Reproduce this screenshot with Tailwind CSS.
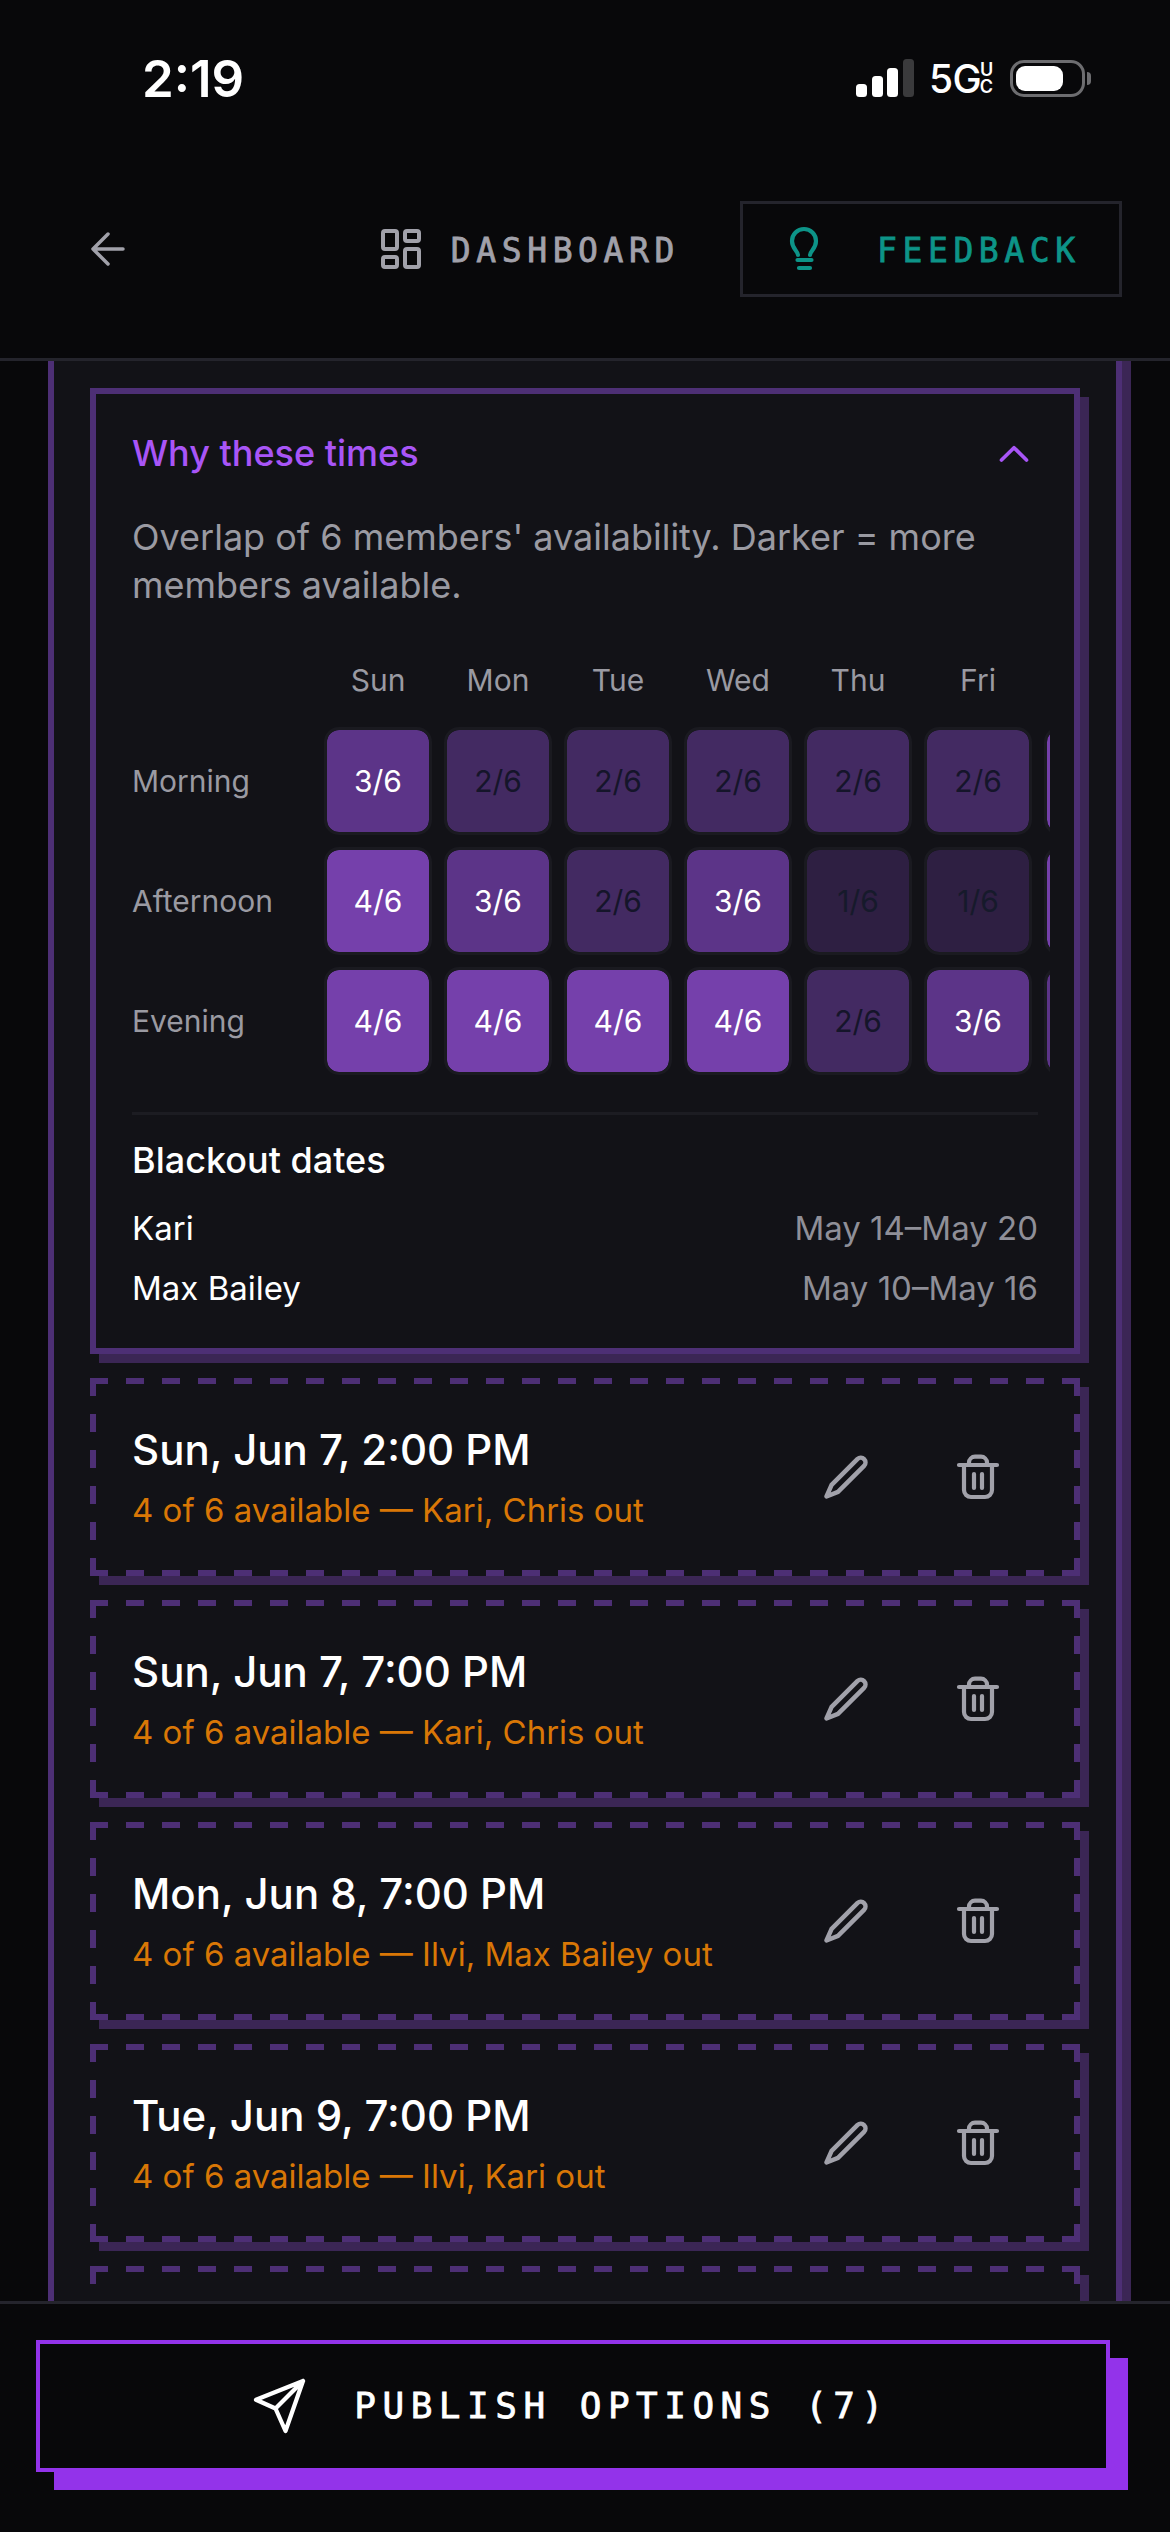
<!DOCTYPE html>
<html lang="en">
<head>
  <meta charset="UTF-8">
  <meta name="viewport" content="width=device-width, initial-scale=1.0">
  <title>Why these times</title>
  <script src="https://cdn.jsdelivr.net/npm/@tailwindcss/browser@4"></script>
</head>
<body class="bg-[#08080a] font-[family-name:Inter,sans-serif] text-white">
  <svg class="hidden">
    <symbol id="dash" viewBox="0 0 990 198">
      <path d="M0 3H990M0 195H990M3 0V198M987 0V198" fill="none" stroke="#4d2f75" stroke-width="6" stroke-dasharray="18 18"/>
    </symbol>
    <symbol id="pencil" viewBox="0 0 44 44">
      <path d="M2.500 41.500L7.600 29.900L33.600 3.900A4.750 4.750 0 0 1 40.300 10.600L14 36.900Z" fill="none" stroke="#a1a1aa" stroke-width="4.500" stroke-linejoin="round"/>
    </symbol>
    <symbol id="trash" viewBox="0 0 44 48">
      <path d="M3 12H41M13 12V9.500A6 6 0 0 1 19 3.700H25A6 6 0 0 1 31 9.500V12M8 12V37A7 7 0 0 0 15 44H29A7 7 0 0 0 36 37V12M18 21V35M26 21V35" fill="none" stroke="#a1a1aa" stroke-width="4.200" stroke-linecap="round"/>
    </symbol>
  </svg>

  <div class="flex flex-col h-[2532px] w-[1170px] overflow-hidden">
    <header class="h-[361px] shrink-0 border-b-[3px] border-[#24242c] bg-[#08080a]">
      <div class="h-[156px] flex items-center pl-[142px] pr-[79px]">
        <span class="text-[51px] font-semibold leading-none">2:19</span>
        <div class="ml-auto flex items-center">
          <svg width="58" height="38" viewBox="0 0 58 38">
            <rect x="0" y="25" width="11" height="13" rx="3.500" fill="#fff"/>
            <rect x="16" y="17" width="11" height="21" rx="3.500" fill="#fff"/>
            <rect x="31" y="9" width="11" height="29" rx="3.500" fill="#fff"/>
            <rect x="47" y="0" width="11" height="38" rx="3.500" fill="#3a3a3c"/>
          </svg>
          <span class="ml-[15px] w-[48px] text-[39px] font-medium leading-none tracking-[-0.500px]">5G</span>
          <span class="ml-[2px] w-[15px] flex flex-col text-center text-[18px] font-semibold leading-[17px]"><span>U</span><span>C</span></span>
          <div class="ml-[16px] flex items-center">
            <div class="w-[75px] h-[37px] border-[3px] border-[#6d6d70] rounded-[14px] p-[3px]">
              <div class="w-[47px] h-full bg-white rounded-[9px]"></div>
            </div>
            <div class="ml-[2px] w-[4px] h-[13px] bg-[#6d6d70] rounded-r-full"></div>
          </div>
        </div>
      </div>
      <nav class="mt-[45px] h-[96px] flex items-center pl-[91px] pr-[48px]">
        <svg width="34" height="34" viewBox="0 0 34 34" fill="none" stroke="#a1a1aa" stroke-width="3.500" stroke-linecap="round" stroke-linejoin="round"><path d="M32 17H2M17 2L2 17L17 32"/></svg>
        <div class="ml-auto flex items-center">
          <svg width="48" height="48" viewBox="0 0 24 24" fill="none" stroke="#a1a1aa" stroke-width="2" stroke-linejoin="round"><rect x="3" y="3" width="7" height="9" rx="1"/><rect x="14" y="3" width="7" height="5" rx="1"/><rect x="14" y="12" width="7" height="9" rx="1"/><rect x="3" y="16" width="7" height="5" rx="1"/></svg>
          <span class="ml-[26px] pt-[2px] font-[family-name:'DejaVu_Sans_Mono',monospace] text-[33px] leading-none tracking-[5.600px] [-webkit-text-stroke:0.8px] text-[#a1a1aa]">DASHBOARD</span>
        </div>
        <div class="ml-[60px] w-[382px] h-[96px] border-[3px] border-[#24242c] flex items-center pl-[40px]">
          <svg width="42" height="48" viewBox="0 0 42 48" fill="none" stroke="#0d9488" stroke-width="4.200" stroke-linecap="round"><path d="M15 30C15 26 9 24 9 16A12 12 0 0 1 33 16C33 24 27 26 27 30"/><path d="M14.500 35H28.500M16 43H27"/></svg>
          <span class="ml-[52px] pt-[2px] font-[family-name:'DejaVu_Sans_Mono',monospace] text-[33px] leading-none tracking-[5.600px] [-webkit-text-stroke:0.8px] text-[#0d9488]">FEEDBACK</span>
        </div>
      </nav>
    </header>

    <main class="flex-1 min-h-0 overflow-hidden">
      <div class="ml-[48px] w-[1074px] border-x-[6px] border-[#4d2f75] bg-[#121217] shadow-[9px_0_0_#3b2655] pt-[27px] px-[36px] pb-[40px] flex flex-col gap-[24px]">

        <section class="h-[966px] border-[6px] border-[#4d2f75] shadow-[9px_9px_0_#3b2655] bg-[#121217] pt-[35px] pl-[36px] pr-[36px] pb-[36px]">
          <div class="flex items-center justify-between h-[48px]">
            <h2 class="text-[36px] leading-[48px] font-medium text-[#a855f7]">Why these times</h2>
            <svg class="mr-[6px]" width="36" height="36" viewBox="0 0 36 36" fill="none" stroke="#a855f7" stroke-width="3.700" stroke-linecap="round" stroke-linejoin="round"><path d="M5.500 25L18 12.700L30.500 25"/></svg>
          </div>
          <p class="mt-[36px] text-[36px] leading-[48px] text-[#9a9aa2]">Overlap of 6 members' availability. Darker = more members available.</p>

          <div class="mt-[51px] mr-[-12px] overflow-hidden">
            <div class="grid grid-cols-[180px_repeat(7,108px)] gap-[12px] w-max text-[30px] items-center">
              <div class="h-[55px]"></div>
              <div class="h-[55px] leading-[40px] text-center text-[#9a9aa2]">Sun</div>
              <div class="h-[55px] leading-[40px] text-center text-[#9a9aa2]">Mon</div>
              <div class="h-[55px] leading-[40px] text-center text-[#9a9aa2]">Tue</div>
              <div class="h-[55px] leading-[40px] text-center text-[#9a9aa2]">Wed</div>
              <div class="h-[55px] leading-[40px] text-center text-[#9a9aa2]">Thu</div>
              <div class="h-[55px] leading-[40px] text-center text-[#9a9aa2]">Fri</div>
              <div class="h-[55px]"></div>

              <div class="text-[#9a9aa2]">Morning</div>
              <div class="h-[108px] flex items-center justify-center border-[3px] border-[#1a1a20] rounded-[15px] bg-clip-padding bg-[#5c3488] text-white">3/6</div>
              <div class="h-[108px] flex items-center justify-center border-[3px] border-[#1a1a20] rounded-[15px] bg-clip-padding bg-[#432a62] text-[#15152a]">2/6</div>
              <div class="h-[108px] flex items-center justify-center border-[3px] border-[#1a1a20] rounded-[15px] bg-clip-padding bg-[#432a62] text-[#15152a]">2/6</div>
              <div class="h-[108px] flex items-center justify-center border-[3px] border-[#1a1a20] rounded-[15px] bg-clip-padding bg-[#432a62] text-[#15152a]">2/6</div>
              <div class="h-[108px] flex items-center justify-center border-[3px] border-[#1a1a20] rounded-[15px] bg-clip-padding bg-[#432a62] text-[#15152a]">2/6</div>
              <div class="h-[108px] flex items-center justify-center border-[3px] border-[#1a1a20] rounded-[15px] bg-clip-padding bg-[#432a62] text-[#15152a]">2/6</div>
              <div class="h-[108px] border-[3px] border-[#1a1a20] rounded-[15px] bg-clip-padding bg-[#7540ab]"></div>

              <div class="text-[#9a9aa2]">Afternoon</div>
              <div class="h-[108px] flex items-center justify-center border-[3px] border-[#1a1a20] rounded-[15px] bg-clip-padding bg-[#7540ab] text-white">4/6</div>
              <div class="h-[108px] flex items-center justify-center border-[3px] border-[#1a1a20] rounded-[15px] bg-clip-padding bg-[#5c3488] text-white">3/6</div>
              <div class="h-[108px] flex items-center justify-center border-[3px] border-[#1a1a20] rounded-[15px] bg-clip-padding bg-[#432a62] text-[#15152a]">2/6</div>
              <div class="h-[108px] flex items-center justify-center border-[3px] border-[#1a1a20] rounded-[15px] bg-clip-padding bg-[#5c3488] text-white">3/6</div>
              <div class="h-[108px] flex items-center justify-center border-[3px] border-[#1a1a20] rounded-[15px] bg-clip-padding bg-[#2e1f42] text-[#161a2b]">1/6</div>
              <div class="h-[108px] flex items-center justify-center border-[3px] border-[#1a1a20] rounded-[15px] bg-clip-padding bg-[#2e1f42] text-[#161a2b]">1/6</div>
              <div class="h-[108px] border-[3px] border-[#1a1a20] rounded-[15px] bg-clip-padding bg-[#7540ab]"></div>

              <div class="text-[#9a9aa2]">Evening</div>
              <div class="h-[108px] flex items-center justify-center border-[3px] border-[#1a1a20] rounded-[15px] bg-clip-padding bg-[#7540ab] text-white">4/6</div>
              <div class="h-[108px] flex items-center justify-center border-[3px] border-[#1a1a20] rounded-[15px] bg-clip-padding bg-[#7540ab] text-white">4/6</div>
              <div class="h-[108px] flex items-center justify-center border-[3px] border-[#1a1a20] rounded-[15px] bg-clip-padding bg-[#7540ab] text-white">4/6</div>
              <div class="h-[108px] flex items-center justify-center border-[3px] border-[#1a1a20] rounded-[15px] bg-clip-padding bg-[#7540ab] text-white">4/6</div>
              <div class="h-[108px] flex items-center justify-center border-[3px] border-[#1a1a20] rounded-[15px] bg-clip-padding bg-[#432a62] text-[#15152a]">2/6</div>
              <div class="h-[108px] flex items-center justify-center border-[3px] border-[#1a1a20] rounded-[15px] bg-clip-padding bg-[#5c3488] text-white">3/6</div>
              <div class="h-[108px] border-[3px] border-[#1a1a20] rounded-[15px] bg-clip-padding bg-[#5c3488]"></div>
            </div>
          </div>

          <div class="mt-[37px] border-t-[3px] border-[#1c1c22] pt-[21px]">
            <h3 class="text-[36px] leading-[48px] font-medium">Blackout dates</h3>
            <div class="mt-[20px] flex flex-col gap-[12px] text-[33px] leading-[48px]">
              <div class="flex justify-between"><span>Kari</span><span class="text-[#8f8f98]">May 14–May 20</span></div>
              <div class="flex justify-between"><span>Max Bailey</span><span class="text-[#8f8f98]">May 10–May 16</span></div>
            </div>
          </div>
        </section>

        <article class="relative h-[198px] shrink-0 shadow-[9px_9px_0_#3b2655] bg-[#121217] flex items-center pl-[42px] pr-[80px]">
          <svg class="absolute inset-0" width="990" height="198"><use href="#dash"/></svg>
          <div class="pt-[3px]">
            <div class="text-[42px] leading-[54px] font-medium">Sun, Jun 7, 2:00 PM</div>
            <div class="mt-[9px] text-[33px] leading-[48px] text-[#d97706]">4 of 6 available — Kari, Chris out</div>
          </div>
          <svg class="ml-auto" width="44" height="44"><use href="#pencil"/></svg>
          <svg class="ml-[88px]" width="44" height="48"><use href="#trash"/></svg>
        </article>

        <article class="relative h-[198px] shrink-0 shadow-[9px_9px_0_#3b2655] bg-[#121217] flex items-center pl-[42px] pr-[80px]">
          <svg class="absolute inset-0" width="990" height="198"><use href="#dash"/></svg>
          <div class="pt-[3px]">
            <div class="text-[42px] leading-[54px] font-medium">Sun, Jun 7, 7:00 PM</div>
            <div class="mt-[9px] text-[33px] leading-[48px] text-[#d97706]">4 of 6 available — Kari, Chris out</div>
          </div>
          <svg class="ml-auto" width="44" height="44"><use href="#pencil"/></svg>
          <svg class="ml-[88px]" width="44" height="48"><use href="#trash"/></svg>
        </article>

        <article class="relative h-[198px] shrink-0 shadow-[9px_9px_0_#3b2655] bg-[#121217] flex items-center pl-[42px] pr-[80px]">
          <svg class="absolute inset-0" width="990" height="198"><use href="#dash"/></svg>
          <div class="pt-[3px]">
            <div class="text-[42px] leading-[54px] font-medium">Mon, Jun 8, 7:00 PM</div>
            <div class="mt-[9px] text-[33px] leading-[48px] text-[#d97706]">4 of 6 available — Ilvi, Max Bailey out</div>
          </div>
          <svg class="ml-auto" width="44" height="44"><use href="#pencil"/></svg>
          <svg class="ml-[88px]" width="44" height="48"><use href="#trash"/></svg>
        </article>

        <article class="relative h-[198px] shrink-0 shadow-[9px_9px_0_#3b2655] bg-[#121217] flex items-center pl-[42px] pr-[80px]">
          <svg class="absolute inset-0" width="990" height="198"><use href="#dash"/></svg>
          <div class="pt-[3px]">
            <div class="text-[42px] leading-[54px] font-medium">Tue, Jun 9, 7:00 PM</div>
            <div class="mt-[9px] text-[33px] leading-[48px] text-[#d97706]">4 of 6 available — Ilvi, Kari out</div>
          </div>
          <svg class="ml-auto" width="44" height="44"><use href="#pencil"/></svg>
          <svg class="ml-[88px]" width="44" height="48"><use href="#trash"/></svg>
        </article>

        <article class="relative h-[198px] shrink-0 shadow-[9px_9px_0_#3b2655] bg-[#121217]">
          <svg class="absolute inset-0" width="990" height="198"><use href="#dash"/></svg>
        </article>
      </div>
    </main>

    <footer class="h-[231px] shrink-0 border-t-[3px] border-[#24242c] bg-[#08080a] pt-[36px] pl-[36px]">
      <button class="w-[1074px] h-[132px] border-[4px] border-[#9333ea] bg-[#08080a] shadow-[18px_18px_0_#9333ea] flex items-center justify-center pr-[8px]">
        <svg width="60" height="60" viewBox="0 0 24 24" fill="none" stroke="#fff" stroke-width="1.700" stroke-linecap="round" stroke-linejoin="round"><path d="M22 2L11 13M22 2L15 22L11 13L3.200 9.500Z"/></svg>
        <span class="ml-[46px] font-[family-name:'DejaVu_Sans_Mono',monospace] text-[36px] leading-none tracking-[6.500px] [-webkit-text-stroke:0.8px] text-white">PUBLISH OPTIONS (7)</span>
      </button>
    </footer>
  </div>
</body>
</html>
